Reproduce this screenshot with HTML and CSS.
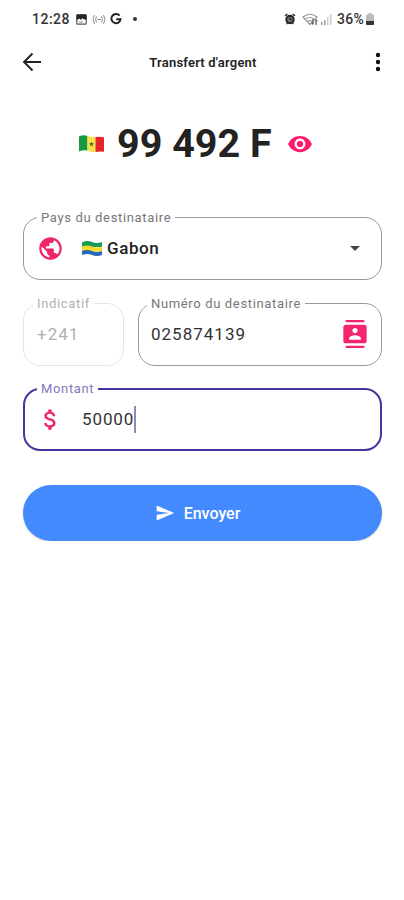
FILE: index.html
```
<!DOCTYPE html>
<html lang="fr">
<head>
<meta charset="utf-8">
<title>Transfert d'argent</title>
<meta name="viewport" content="width=device-width, initial-scale=1.0">
<link rel="stylesheet" href="styles.css">
</head>

<body>
<div class="status">
  <span class="clock">12:28</span>
  <svg class="st-picture" width="11" height="11" viewBox="0 0 11 11"><rect x=".8" y=".8" width="9.4" height="9.4" rx="1" fill="none" stroke="#555" stroke-width="1.2"/><path d="M.5.500h10v5H8L6.500 4 5 6 3.500 4.500 2 5.500H.5z" fill="#222"/><path d="M3 8h4" stroke="#888"/></svg>
  <svg class="st-cast" width="14" height="11" viewBox="0 0 14 11" fill="none" stroke="#888"><path d="M2.500 1q-3 4.500 0 9M4.500 2.500q-2 3 0 6M11.500 1q3 4.500 0 9M9.500 2.500q2 3 0 6M5 5.500h4"/></svg>
  <svg class="st-google" width="12" height="12" viewBox="0 0 12 12" fill="none" stroke="#222" stroke-width="1.900"><path d="M9.600 2.700A4.600 4.600 0 1 0 10.600 6.200H6.300"/></svg>
  <span class="dot"></span>
  <span class="space"></span>
  <svg class="st-alarm" width="12" height="12" viewBox="0 0 12 12"><circle cx="6" cy="6.500" r="3.700" fill="#777" stroke="#222" stroke-width="2"/><path d="M1 3l2.300-2M11 3L8.700 1M2.500 11l1-1M9.500 11l-1-1" stroke="#222" stroke-width="1.400"/><path d="M6 4.500v2.300h1.500" stroke="#111" fill="none"/></svg>
  <svg class="st-wifi" width="17" height="13" viewBox="0 0 17 13" fill="none" stroke="#999" stroke-width="1.200"><path d="M1 4q7-5.500 14 0L8 11.500zM3.500 6q4.500-3 8 0M6 8.300q2-1.300 4 0"/><path d="M11 6v5.500M9.800 10l1.200 1.500M14 12V6.500M14 6.500l1.200 1.500" stroke="#555"/></svg>
  <svg class="st-signal" width="12" height="11" viewBox="0 0 12 11"><path d="M1 8h1.500v3H1zM4 6h1.500v5H4z" fill="#999"/><path d="M7 3h1.500v8H7zM10 0h1.500v11H10z" fill="#ccc"/></svg>
  <span class="percent">36%</span>
  <svg class="st-battery" width="8" height="12" viewBox="0 0 8 12"><path d="M2.500 0h3v1.500H7q1 0 1 1V8H0V2.500q0-1 1-1h1.500z" fill="#bbb"/><path d="M0 8h8v3q0 1-1 1H1q-1 0-1-1z" fill="#333"/></svg>
</div>

<div class="appbar">
  <svg class="back" width="24" height="24" viewBox="0 0 24 24"><path d="M21 12H4M12.500 3.500L4 12l8.500 8.500" fill="none" stroke="#222" stroke-width="1.900"/></svg>
  <h1>Transfert d'argent</h1>
  <svg class="more" width="24" height="24" viewBox="0 0 24 24" fill="#111"><circle cx="12" cy="5" r="2.200"/><circle cx="12" cy="12" r="2.200"/><circle cx="12" cy="19" r="2.200"/></svg>
</div>

<div class="balance">
  <svg class="flag-sn" width="25" height="18" viewBox="0 0 25 18"><path d="M0 1.500Q4-.5 8.500 1v14.500Q4 14.500 0 16.500z" fill="#15993f"/><path d="M8.500 1q4 1.500 8 1v15q-4 .5-8-1.500z" fill="#fae042"/><path d="M16.500 2q4-.8 8.500.5v14.200q-4-.7-8.500.3z" fill="#e3242b"/><path d="M12.500 6.500l.7 1.700H15l-1.400 1.200.6 1.900-1.700-1.100-1.700 1.100.6-1.900L10 8.200h1.800z" fill="#27772f"/></svg>
  <span class="amount">99 492 F</span>
  <svg class="eye" width="26" height="26" viewBox="0 0 24 24" fill="#fb1a6d"><path d="M12 4.500C7 4.500 2.730 7.610 1 12c1.730 4.390 6 7.500 11 7.500s9.270-3.110 11-7.500c-1.730-4.390-6-7.500-11-7.500zM12 17c-2.760 0-5-2.240-5-5s2.240-5 5-5 5 2.240 5 5-2.240 5-5 5zm0-8c-1.660 0-3 1.340-3 3s1.340 3 3 3 3-1.340 3-3-1.340-3-3-3z"/></svg>
</div>

<form class="form">
  <fieldset class="field country">
    <legend>Pays du destinataire</legend>
    <div class="line">
      <svg class="lead" width="27" height="27" viewBox="0 0 24 24" fill="#f0246c"><path d="M12 2C6.480 2 2 6.480 2 12s4.480 10 10 10 10-4.480 10-10S17.520 2 12 2zm-1 17.930c-3.950-.49-7-3.850-7-7.930 0-.62.080-1.210.21-1.790L9 15v1c0 1.100.9 2 2 2v1.930zm6.900-2.540c-.26-.81-1-1.390-1.900-1.390h-1v-3c0-.55-.45-1-1-1H8v-2h2c.55 0 1-.45 1-1V7h2c1.100 0 2-.9 2-2v-.41c2.930 1.190 5 4.060 5 7.410 0 2.080-.8 3.970-2.100 5.390z"/></svg>
      <svg class="flag-ga" width="20" height="15" viewBox="0 0 20 15"><path d="M0 1.500Q5-1 10 1t10 0v5H0z" fill="#169b55"/><path d="M0 5.500q5-2 10 0t10 0v5H0z" fill="#f8d92c"/><path d="M0 10q5-2 10 0t10 0v4q-5 2-10 0T0 14z" fill="#2768b5"/></svg>
      <span class="name">Gabon</span>
      <svg class="caret" width="10" height="5" viewBox="0 0 10 5"><path d="M0 0h10L5 5z" fill="#444"/></svg>
    </div>
  </fieldset>

  <div class="phone">
    <fieldset class="field code">
      <legend>Indicatif</legend>
      <div class="line">
        <span class="value">+241</span>
      </div>
    </fieldset>
    <fieldset class="field number">
      <legend>Numéro du destinataire</legend>
      <div class="line">
        <span class="value">025874139</span>
        <svg class="contact" width="28" height="28" viewBox="0 0 24 24" fill="#f5246f"><path d="M20 0H4v2h16V0zM4 24h16v-2H4v2zM20 4H4c-1.100 0-2 .9-2 2v12c0 1.100.9 2 2 2h16c1.100 0 2-.9 2-2V6c0-1.100-.9-2-2-2zm-8 2.750c1.240 0 2.250 1.010 2.250 2.250s-1.010 2.250-2.250 2.250S9.750 10.240 9.750 9 10.760 6.750 12 6.750zM17 17H7v-1.500c0-1.670 3.330-2.500 5-2.500s5 .83 5 2.500V17z"/></svg>
      </div>
    </fieldset>
  </div>

  <fieldset class="field sum">
    <legend>Montant</legend>
    <div class="line">
      <svg class="lead" width="27" height="27" viewBox="0 0 24 24" fill="#f0246c"><path d="M11.800 10.900c-2.270-.59-3-1.200-3-2.150 0-1.090 1.010-1.850 2.700-1.850 1.780 0 2.440.85 2.500 2.100h2.210c-.07-1.720-1.120-3.300-3.210-3.810V3h-3v2.160c-1.940.42-3.500 1.680-3.500 3.610 0 2.310 1.910 3.460 4.700 4.130 2.500.6 3 1.480 3 2.410 0 .69-.49 1.790-2.700 1.790-2.060 0-2.870-.92-2.980-2.100h-2.200c.12 2.190 1.760 3.420 3.680 3.830V21h3v-2.150c1.950-.37 3.500-1.500 3.500-3.550 0-2.840-2.430-3.810-4.700-4.400z"/></svg>
      <span class="value">50000</span>
      <span class="cursor"></span>
    </div>
  </fieldset>

  <button class="send" type="button">
    <svg width="20" height="20" viewBox="0 0 24 24" fill="#fff"><path d="M2.010 21L23 12 2.010 3 2 10l15 2-15 2z"/></svg>
    <span>Envoyer</span>
  </button>
</form>
</body>
</html>
```
FILE: styles.css
```
* {box-sizing:border-box;}
body {
 margin:0;
 background:#fff;
 color:#222;
 font-family:Roboto, sans-serif;
}
svg {
 display:block;
 flex:none;
}
.status {
 display:flex;
 align-items:center;
 height:38px;
 padding:0 30px 0 32px;
 font-size:14px;
 font-weight:500;
 color:#333;
}
.clock {
 width:39px;
 letter-spacing:0.5px;
}
.st-picture {margin-left:5px;}
.st-cast {margin-left:5px;}
.st-google {margin-left:4px;}
.dot {
 width:4px;
 height:4px;
 margin-left:11px;
 border-radius:50%;
 background:#333;
}
.space {flex:1;}
.st-wifi {margin-left:6px;}
.st-signal {margin-left:1px;}
.percent {
 width:28px;
 margin-left:5px;
 letter-spacing:0.3px;
}
.st-battery {margin-left:1px;}
.appbar {
 display:flex;
 align-items:center;
 justify-content:space-between;
 height:48px;
 padding:0 14px 0 20px;
}
.appbar h1 {
 margin:0 4px 0 0;
 font-size:13px;
 font-weight:600;
 letter-spacing:0.2px;
}
.balance {
 display:flex;
 align-items:center;
 height:116px;
 padding-left:79px;
}
.amount {
 width:156px;
 margin:0 14px 0 13px;
 font-size:39.5px;
 font-weight:700;
 line-height:46px;
 white-space:nowrap;
}
.form {
 display:flex;
 flex-direction:column;
 padding:8px 22px 0 23px;
}
.field {
 min-width:0;
 height:70px;
 margin:0;
 padding:0 0 0 13px;
 border:1px solid #999;
 border-radius:17px;
 font-size:17px;
 color:#333;
}
.field legend {
 height:15px;
 padding:0 4px;
 font-size:13px;
 line-height:15px;
 letter-spacing:0.65px;
 color:#777;
 white-space:nowrap;
}
.line {
 display:flex;
 align-items:center;
 height:46px;
}
.name {
 margin-left:5px;
 font-weight:500;
 letter-spacing:0.6px;
 color:#222;
}
.flag-ga {margin-left:18px;}
.caret {margin:0 21px 0 auto;}
.phone {
 display:flex;
 gap:14px;
 margin-top:16px;
}
.number {
 flex:1;
 padding-left:12px;
}
.phone legend {margin-left:-4px;}
.phone .value {letter-spacing:1px;}
.code {
 width:101px;
 border-color:#e6e6e6;
}
.field.code, .code legend {color:#b0b0b0;}
.contact {margin:0 12px 0 auto;}
.field.sum {
 height:69px;
 margin-top:16px;
 padding-left:12px;
 border:2px solid #4733a0;
}
.sum legend {
 height:14px;
 line-height:14px;
 color:#8378bd;
}
.sum .value {
 margin-left:18px;
 letter-spacing:0.9px;
}
.cursor {
 width:2px;
 height:27px;
 background:#9088bd;
}
.send {
 display:flex;
 align-items:center;
 justify-content:center;
 gap:9px;
 height:56px;
 margin-top:34px;
 padding:0 10px 0 0;
 border:0;
 border-radius:28px;
 background:#448aff;
 box-shadow:0 1px 2px rgba(0,0,0,0.2);
 color:#fff;
 font-family:inherit;
 font-size:16px;
 font-weight:500;
}
```
